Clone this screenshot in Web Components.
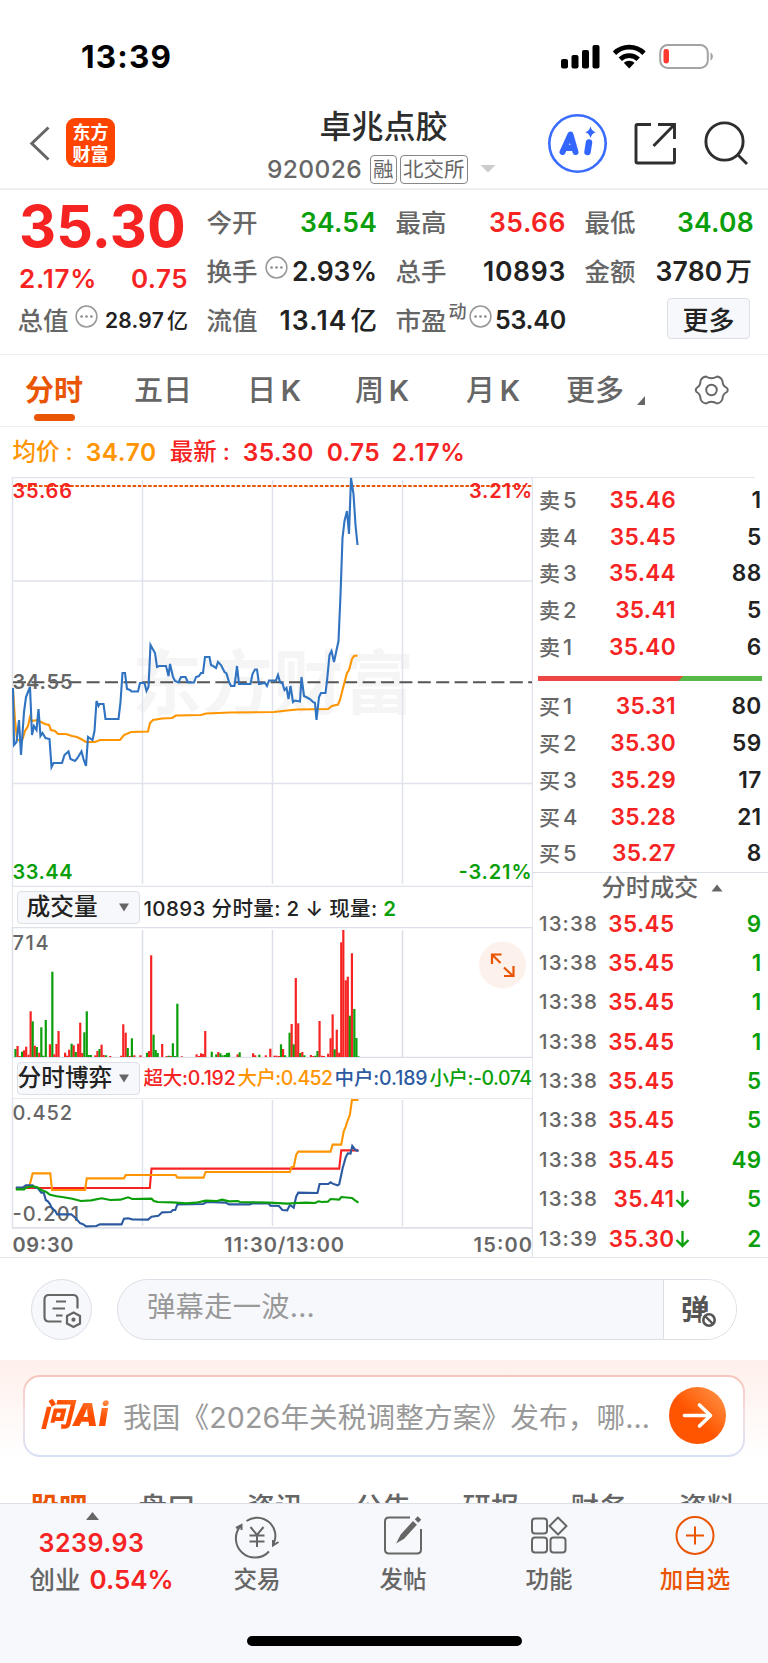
<!DOCTYPE html>
<html lang="zh-CN">
<head>
<meta charset="utf-8">
<title>卓兆点胶 920026</title>
<style>
  body {
    margin: 0;
    width: 768px;
    background: #fff;
    color: #222;
    font-family: Inter, "Noto Sans CJK SC", sans-serif;
    font-weight: 500;
    --red: #f62323;
    --green: #0a9f0a;
    --grey: #666;
    --brand: #ea5504;
    --line: #e4e6ec;
    --num: 560;
  }
</style>
</head>
<body>
<status-bar time="13:39"></status-bar>
<stock-nav code="920026">卓兆点胶</stock-nav>
<quote-panel></quote-panel>
<chart-tabs></chart-tabs>
<trade-area></trade-area>
<danmu-bar></danmu-bar>
<ask-ai>我国《2026年关税调整方案》发布，哪…</ask-ai>
<bottom-bar></bottom-bar>

<script>
class BaseElement extends HTMLElement {
  connectedCallback() {
    if (this.shadowRoot) return;
    this.attachShadow({ mode: "open" });
    this.shadowRoot.innerHTML = this.render();
  }
}

// Text tracked out to a given advance width
class FitText extends HTMLElement {
  connectedCallback() {
    if (this.shadowRoot) return;
    this.attachShadow({ mode: "open" });
    this.shadowRoot.innerHTML = `
    <style>
    :host { display: inline-block; white-space: nowrap; }
    span { display: inline-block; }
    </style>
    <span><slot></slot></span>`;
    const count = [...this.textContent].length;
    const natural = this.shadowRoot.querySelector("span").getBoundingClientRect().width;
    const width = Number(this.getAttribute("w"));
    this.style.letterSpacing = (width - natural) / count + "px";
  }
}
customElements.define("fit-text", FitText);

class InfoDot extends BaseElement {
  render() {
    return `
    <style>
    :host { display: block; width: 23px; height: 23px; flex: none; }
    svg { display: block; }
    </style>
    <svg width="23" height="23" viewBox="0 0 23 23">
      <circle cx="11.5" cy="11.5" r="10.4" fill="none" stroke="#999" stroke-width="1.5"/>
      <g fill="#888"><circle cx="6.6" cy="11.5" r="1.3"/><circle cx="11.5" cy="11.5" r="1.3"/><circle cx="16.4" cy="11.5" r="1.3"/></g>
    </svg>`;
  }
}
customElements.define("info-dot", InfoDot);

class StatusBar extends BaseElement {
  render() {
    return `
    <style>
    :host { display: flex; height: 92px; box-sizing: border-box; padding: 40px 55px 0 81px; justify-content: space-between; color: #000; }
    .time { font-size: 31.5px; line-height: 33px; font-weight: 700; }
    svg { display: block; margin-top: 2px; }
    </style>
    <fit-text class="time" w="91">${this.getAttribute("time")}</fit-text>
    <svg width="153" height="28" viewBox="560 42 153 28">
      <rect x="561" y="59" width="7" height="9.5" rx="2"/>
      <rect x="571.5" y="55" width="7" height="13.5" rx="2"/>
      <rect x="582" y="50" width="7" height="18.5" rx="2"/>
      <rect x="592.5" y="45" width="7" height="23.5" rx="2"/>
      <g fill="none" stroke="#000" stroke-width="4.8">
        <path d="M614.5 53.2a21 21 0 0 1 29.5 0"/>
        <path d="M620.3 59.2a12.8 12.8 0 0 1 17.9 0"/>
      </g>
      <path d="M623.8 62.8a8 8 0 0 1 10.8 0L629.2 68.6z"/>
      <rect x="660.2" y="45" width="47.6" height="23" rx="7.5" fill="none" stroke="#a3a3a3" stroke-width="2"/>
      <rect x="663.5" y="49" width="5.5" height="14.5" rx="2.4" fill="#ff3b30"/>
      <path d="M710.5 52.5c3.2 1.4 3.2 6.600 0 8z" fill="#a3a3a3"/>
    </svg>`;
  }
}
customElements.define("status-bar", StatusBar);

class StockNav extends BaseElement {
  render() {
    return `
    <style>
    :host { display: grid; grid-template-columns: 220px 1fr 220px; height: 98px; border-bottom: 2px solid #eee; box-sizing: border-box; }
    .left { display: flex; align-items: flex-start; padding: 26px 0 0 28px; }
    .logo { margin-left: 14px; width: 49px; height: 49px; border-radius: 9px; background: #ff4400; color: #fff; font: 700 18px/22px "Noto Sans CJK SC", sans-serif; text-align: center; padding-top: 2px; box-sizing: border-box; }
    .mid { display: flex; flex-direction: column; align-items: center; padding-top: 17px; }
    .name { font-size: 32px; line-height: 36px; color: #2d2d2d; margin-left: -1px; }
    .sub { display: flex; align-items: center; align-self: flex-start; margin-left: 47px; height: 32px; margin-top: 8px; color: var(--grey); font-size: 24.5px; }
    .tag { border: 1.5px solid #888; border-radius: 4px; height: 27px; line-height: 27px; font-size: 20.5px; font-weight: 400; padding: 0 2px; margin-right: 3.5px; }
    .tag:first-of-type { margin-left: 8px; }
    .right { display: block; }
    </style>
    <div class="left">
      <svg width="24" height="50" viewBox="28 118 24 50"><path d="M48.5 127.5L31.8 143.5L48.5 159.5" fill="none" stroke="#666" stroke-width="3"/></svg>
      <div class="logo">东方<br>财富</div>
    </div>
    <div class="mid">
      <div class="name"><slot></slot></div>
      <div class="sub"><fit-text w="95">${this.getAttribute("code")}</fit-text><span class="tag">融</span><span class="tag">北交所</span>
        <svg width="16" height="8" style="margin-left:9px"><path d="M0.5 0h15l-7.5 7.5z" fill="#ccc"/></svg>
      </div>
    </div>
    <svg class="right" width="220" height="90" viewBox="548 92 220 90">
      <circle cx="577.5" cy="143.5" r="28.2" fill="#fff" stroke="#3a6cff" stroke-width="2.6"/>
      <g fill="none" stroke="#3366ff" stroke-linecap="round" stroke-linejoin="round">
        <path d="M562.5 152L570.5 134.500L575.5 152M566.5 148h7" stroke-width="6"/>
        <path d="M589 142.5l-1.500 9.500" stroke-width="6.5"/>
      </g>
      <path d="M590.5 126.500q1.200 4.500 5.300 5.700q-4.100 1.200-5.300 5.700q-1.200-4.500-5.300-5.700q4.100-1.200 5.300-5.700z" fill="#3366ff"/>
      <g fill="none" stroke="#2e2e2e" stroke-width="2.9">
        <path d="M651 124.500H637.500Q636 124.500 636 126V161.500Q636 163 637.500 163H673Q674.500 163 674.500 161.500V148"/>
        <path d="M658 124.500H674.500V139M674 125L653.500 146"/>
        <circle cx="724.500" cy="141.500" r="18.6"/>
        <path d="M737.500 154.500L747 164"/>
      </g>
    </svg>`;
  }
}
customElements.define("stock-nav", StockNav);

class QuoteCell extends BaseElement {
  render() {
    const tone = this.getAttribute("tone");
    const unit = this.getAttribute("unit");
    return `
    <style>
    :host { display: flex; align-items: center; height: 49px; line-height: 49px; }
    .label { color: var(--grey); font-size: 25.5px; flex: none; margin-left: -1.5px; }
    sup { color: var(--grey); font-size: 18px; line-height: 20px; margin: -17px 2px 0 2px; }
    info-dot { margin: -8px 0 0 var(--dot-gap, 7px); }
    fit-text { color: ${tone ? `var(--${tone})` : "inherit"}; font-size: var(--size, 26.5px); font-weight: var(--num); margin-left: auto; }
    .unit { font-size: var(--size, 26.5px); margin-left: 3px; }
    </style>
    <span class="label">${this.getAttribute("label")}</span>${this.hasAttribute("sup") ? `<sup>${this.getAttribute("sup")}</sup>` : ""}${this.hasAttribute("dot") ? "<info-dot></info-dot>" : ""}
    <fit-text w="${this.getAttribute("w")}">${this.getAttribute("value")}</fit-text>${unit ? `<span class="unit">${unit}</span>` : ""}`;
  }
}
customElements.define("quote-cell", QuoteCell);

class QuotePanel extends BaseElement {
  render() {
    return `
    <style>
    :host { display: grid; grid-template-columns: 169px 169px 169px 168px; column-gap: 20px; height: 165px; box-sizing: border-box; border-bottom: 1px solid #eee; padding: 8px 0 0 19px; }
    .price { color: var(--red); font-size: 57.5px; font-weight: 700; line-height: 56px; height: 56px; vertical-align: top; }
    .change { display: flex; justify-content: space-between; color: var(--red); font-size: 26px; font-weight: var(--num); height: 42px; line-height: 49px; }
    button { display: block; margin: 2px 4px 0 auto; width: 83px; height: 41px; font: 500 26px/37px "Noto Sans CJK SC", sans-serif; color: #222; background: #f7f8fb; border: 1.5px solid #dcdfe6; border-radius: 4px; padding: 0; }
    </style>
    <div>
      <fit-text class="price" w="167">35.30</fit-text>
      <div class="change"><fit-text w="78">2.17%</fit-text><fit-text w="57">0.75</fit-text></div>
      <quote-cell style="--size:21px;--dot-gap:6px" label="总值" dot value="28.97" unit="亿" w="59"></quote-cell>
    </div>
    <div>
      <quote-cell label="今开" value="34.54" w="77" tone="green"></quote-cell>
      <quote-cell label="换手" dot value="2.93%" w="85"></quote-cell>
      <quote-cell label="流值" value="13.14" unit="亿" w="68"></quote-cell>
    </div>
    <div>
      <quote-cell label="最高" value="35.66" w="77" tone="red"></quote-cell>
      <quote-cell label="总手" value="10893" w="83"></quote-cell>
      <quote-cell style="--dot-gap:0px;--size:25px" label="市盈" sup="动" dot value="53.40" w="71"></quote-cell>
    </div>
    <div>
      <quote-cell label="最低" value="34.08" w="77" tone="green"></quote-cell>
      <quote-cell style="margin-right:2px" label="金额" value="3780" unit="万" w="67"></quote-cell>
      <button>更多</button>
    </div>`;
  }
}
customElements.define("quote-panel", QuotePanel);

class ChartTabs extends BaseElement {
  render() {
    return `
    <style>
    :host { display: flex; height: 72px; box-sizing: border-box; border-bottom: 1.5px solid #eee; padding-left: 25px; color: var(--grey); font-size: 29px; line-height: 71px; word-spacing: -3px; }
    div { width: 110px; white-space: nowrap; }
    .on { color: var(--brand); font-weight: 700; display: flex; flex-direction: column; }
    .on::after { content: ""; width: 41px; height: 7px; border-radius: 3.5px; background: var(--brand); margin: -12px 0 0 9px; }
    i { font-style: normal; font-weight: 600; }
    svg { display: block; }
    </style>
    <div class="on">分时</div>
    <div style="width:109px;margin-left:-1px">五日</div>
    <div style="width:112px;margin-left:4px">日 <i>K</i></div>
    <div style="width:111px;margin-left:-4px">周 <i>K</i></div>
    <div style="width:100px">月 <i>K</i></div>
    <div style="width:71px">更多</div>
    <svg width="120" height="70" viewBox="638 355 120 70">
      <path d="M646 396v9h-8z" fill="#666"/>
      <g fill="none" stroke="#666" stroke-width="1.9" stroke-linejoin="round">
        <path d="M707 376.500Q712.500 380 718 376.500Q722 377 723.500 381Q723.500 386 728 388Q729.500 390 728 392Q723.500 394 723.500 399Q722 403 718 403.500Q712.500 400 707 403.500Q703 403 701.500 399Q701.500 394 697.500 392Q696 390 697.500 388Q701.500 386 701.500 381Q703 377 707 376.500z"/>
        <circle cx="712.5" cy="390" r="5.3"/>
      </g>
    </svg>`;
  }
}
customElements.define("chart-tabs", ChartTabs);

class PriceChart extends BaseElement {
  render() {
    const price = "13,688 14,745 16.5,742 19,720 21,755 24,712 26,697 30,687 32,735 34,726 36.5,730 38.5,709 40.5,736 42.5,733 45.5,738 49.5,739 51.5,767 53.5,763 62,763 64.5,755 68.5,751.5 70.5,759 75,761 77.5,758 81.5,751.5 83.5,759 86,766 88,737 92.5,740 94.5,731 96.5,701 98.5,706 99.5,704 103.5,704 105.5,719 118.5,719 120.5,702 122.5,673 125,673 127,689 130,690 131.5,691.5 138,691.5 140,683 144.5,683 146.5,691 148.5,687 150.5,645 155,653 157,667 159,666 166,666 168.5,676 170,664 173,677 175,681 178.5,682.5 181,677 185.5,677 188,682.5 194,682.5 196,677 199,676 201,673 203,673 205,657 209.5,657 211,665 213,666 216,668 218,662 221,665 224.5,672 226.5,673.5 229,682 231,686 234.5,686 237,666 239,684 250.5,684 252.5,674 255,669.5 257,669.5 259,684 265,683 267,686 269,680.5 276,680.5 278,675 280,682 282.5,683.5 284.5,690 286.5,688 288.5,699 290.5,686 293,702 295,700.5 300,701.5 301.5,677 304,696 308,698 310.5,699.5 313,702 315,703 316.5,720 319,697 321,693 325.5,693 327,681 329.5,655 331.5,651 334,662 338.5,641 340.5,595 342.5,538 344.5,521 347,511 349,534 351,478 353.5,494 355.5,525 357.5,545";
    const average = "13,690 15,720 17,739 20,741 22,741 25,731 28,726 30,717 32,721 37,720 41,722 45,724 49,725 51,730 55,731 58,734 66,734 72,736 77,737 81,739 86,742 95,742 100,740 120,740 124,735 131,732 148,731.5 150,723 153,720 162,718.5 172,718 176,715.5 201,715 206,713.5 230,712.5 274,712 287,710.5 297,709.5 328,709 332,706 338,704.5 340,700 343,688 347,673 349,670 352,659 354,656 357.5,655.5";
    return `
    <style>
    :host { display: block; height: 410px; }
    svg { display: block; }
    text { font-size: 20px; font-weight: var(--num); }
    .mark { font: 700 70px "Noto Sans CJK SC", sans-serif; fill: #f5f5f6; }
    </style>
    <svg width="533" height="410" viewBox="0 477 533 410">
      <text class="mark" x="132" y="709" textLength="282">东方财富</text>
      <g stroke="#e0e3ec" fill="none" stroke-width="1.5">
        <path d="M12.5 477.5H533M12.5 477V886.500H533M12.5 581H532M12.5 783.5H532M142.5 480V884M272.5 480V884M402.5 480V884M532.5 477V887"/>
      </g>
      <path d="M13 486H532" stroke="#ea5504" stroke-width="2" stroke-dasharray="3.5 1.7"/>
      <path d="M13 682.3H532" stroke="#555" stroke-width="2" stroke-dasharray="13 5.4"/>
      <polyline points="${average}" fill="none" stroke="#ff9500" stroke-width="2.1"/>
      <polyline points="${price}" fill="none" stroke="#2f73c1" stroke-width="2.1"/>
      <text x="12.5" y="498" textLength="59.5" fill="#f62323">35.66</text>
      <text x="469" y="498" textLength="63" fill="#f62323">3.21%</text>
      <text x="12.5" y="689" textLength="60" fill="#666">34.55</text>
      <text x="12.5" y="879" textLength="60" fill="#0a9f0a">33.44</text>
      <text x="458.5" y="879" textLength="73" fill="#0a9f0a">-3.21%</text>
    </svg>`;
  }
}
customElements.define("price-chart", PriceChart);

// Indicator picker with its readout passed in
class IndicatorHead extends BaseElement {
  render() {
    return `
    <style>
    :host { display: flex; align-items: center; height: 40px; white-space: nowrap; border: solid var(--line); border-width: 0 1px; margin-left: 12px; padding-left: 3.5px; box-sizing: border-box; }
    .pick { display: flex; align-items: center; justify-content: space-between; flex: none; width: 123px; height: 33px; box-sizing: border-box; border: 1.5px solid #dcdfe6; border-radius: 4px; background: #f7f8fb; font-size: 23.7px; line-height: 30px; padding: 0 10px 0 var(--pad, 9px); margin-right: 4px; }
    </style>
    <div class="pick"><span>${this.getAttribute("name")}</span><svg width="10" height="9"><path d="M0 .5h10l-5 8z" fill="#666"/></svg></div>
    <slot></slot>`;
  }
}
customElements.define("indicator-head", IndicatorHead);

class VolumeChart extends BaseElement {
  render() {
    const bars = "45:507g 51:498r 57:528r 64:515g 70:511r 76:500r 83:524r 89:394r 95:424g 101:497r 107:501g 114:518r 120:442g 126:527g 133:420g 145:493r 152:275g 158:523r 164:492r 170:453r 189:518r 195:527r 201:509r 208:491g 214:496r 220:516g 227:491r 233:428r 239:519r 245:457g 252:394g 258:525g 264:525g 277:526r 283:513r 289:507g 295:494r 301:525r 308:526g 320:528r 352:527r 358:433r 365:458r 371:504g 377:528r 383:475g 390:526r 408:526r 427:518g 433:513r 439:226r 446:464g 452:510g 458:519g 471:492r 484:528r 490:527g 496:528r 502:490g 509:528g 515:371g 528:529r 571:523r 578:528r 584:520r 590:522r 596:453r 615:515g 628:523g 634:516r 640:520g 646:526g 653:525g 659:519g 665:518g 690:523r 696:517g 735:520r 741:526r 753:524g 772:526r 785:506r 797:527r 803:527r 810:528r 816:493g 822:507r 828:526g 841:458g 847:432r 853:493g 859:294r 866:430r 872:519g 878:516r 884:526g 903:525r 910:528r 916:527g 922:513g 928:423r 935:527r 941:528r 953:521r 960:475r 966:403r 972:508g 978:449r 985:518r 991:187r 997:150r 1004:301r 1010:290r 1016:407g 1022:220r 1029:387g 1035:474g 1041:529g";
    const rects = bars.split(" ").map((bar) => {
      const [, x, y, tone] = bar.match(/(\d+):(\d+)([rg])/);
      const top = 880 + y / 3;
      return `<rect x="${(x / 2.904 - 1.1).toFixed(2)}" y="${top.toFixed(1)}" width="2.2" height="${(1057 - top).toFixed(1)}" fill="${tone === "r" ? "#f62323" : "#0a9f0a"}"/>`;
    }).join("");
    return `
    <style>
    :host { display: block; height: 131px; }
    svg { display: block; }
    text { font-size: 20px; font-weight: 500; fill: #666; }
    </style>
    <svg width="533" height="131" viewBox="0 927 533 131">
      <path d="M12.5 927.5H533M142.5 930V1057M272.5 930V1057M402.5 930V1057M12.5 927V1057.5H533M532.5 927V1058" fill="none" stroke="#dcdfe8" stroke-width="1.5"/>
      ${rects}
      <text x="12.5" y="949.5" textLength="36">714</text>
      <circle cx="502.5" cy="965" r="23.5" fill="#fdf1eb"/>
      <path d="M501.5 954.5H492V964M492.5 955L500.5 963M504 967.5L513 976M513.5 966V976H504" fill="none" stroke="#ea5504" stroke-width="2.2"/>
    </svg>`;
  }
}
customElements.define("volume-chart", VolumeChart);

class FlowChart extends BaseElement {
  render() {
    const lines = [
      ["#f62323", "46,386 60,384 435,384 440,326 985,326 991,271 1041,271"],
      ["#ff9500", "46,388 80,380 87,372 95,340 146,340 151,390 247,390 252,355 360,355 365,345 510,345 515,353 591,353 597,336 842,336 847,321 853,321 860,285 866,275 960,275 966,254 991,254 998,215 1004,200 1010,180 1016,165 1022,120 1041,120"],
      ["#2c5aa0", "46,383 66,383 75,376 95,376 101,383 110,385 120,398 127,398 133,420 139,424 145,432 151,445 160,452 166,463 207,463 220,475 233,490 240,492 250,499 280,498 290,493 353,493 360,476 372,475 384,478 430,479 440,470 460,467 471,457 496,456 502,450 509,450 515,433 590,432 600,426 655,428 665,433 725,433 735,430 780,430 785,437 810,438 820,450 834,451 842,435 853,443 860,410 866,398 922,399 928,372 953,372 960,367 966,371 980,376 985,373 995,325 1004,292 1010,280 1018,281 1023,258 1032,270 1041,273"],
      ["#0a9f0a", "46,388 70,388 76,383 95,379 108,382 120,390 133,395 145,404 165,409 185,412 210,416 235,423 265,421 295,415 320,420 350,419 372,412 384,417 440,416 447,423 458,426 500,427 540,430 570,428 597,422 630,423 645,419 665,424 690,423 697,426 780,428 835,431 860,429 890,428 915,429 925,424 935,426 952,425 960,417 985,419 991,411 1022,414 1032,422 1041,428"],
    ];
    return `
    <style>
    :host { display: block; height: 159px; }
    svg { display: block; }
    text { font-size: 20px; fill: #666; font-weight: 500; }
    .axis text { font-weight: var(--num); }
    polyline { fill: none; stroke-width: 2.1; vector-effect: non-scaling-stroke; }
    </style>
    <svg width="533" height="159" viewBox="0 1098 533 159">
      <path d="M12.5 1098H533M142.5 1100V1226M272.5 1100V1226M402.5 1100V1226M12.5 1098V1227M532.5 1098V1257" fill="none" stroke="#dfe2ea" stroke-width="1.5"/>
      <path d="M12 1227.800H532" stroke="#dcdfe6" stroke-width="1.8"/>
      <text x="12.5" y="1120" textLength="59.5">0.452</text>
      <text x="12.5" y="1220.500" textLength="66.5">-0.201</text>
      <g transform="translate(0 1060) scale(.34436 .33333)">
        ${lines.map(([color, points]) => `<polyline points="${points}" stroke="${color}"/>`).join("")}
      </g>
      <g class="axis">
        <text x="12.5" y="1251.500" textLength="61">09:30</text>
        <text x="224" y="1251.500" textLength="120">11:30/13:00</text>
        <text x="473.5" y="1251.500" textLength="58.5">15:00</text>
      </g>
    </svg>`;
  }
}
customElements.define("flow-chart", FlowChart);

class OrderBook extends BaseElement {
  row([label, price, qty]) {
    return `<div class="row"><span class="l">${label[0]}<i>${label[1]}</i></span><span class="p">${price}</span><span class="q">${qty}</span></div>`;
  }
  render() {
    const sells = [["卖5", "35.46", 1], ["卖4", "35.45", 5], ["卖3", "35.44", 88], ["卖2", "35.41", 5], ["卖1", "35.40", 6]];
    const buys = [["买1", "35.31", 80], ["买2", "35.30", 59], ["买3", "35.29", 17], ["买4", "35.28", 21], ["买5", "35.27", 8]];
    return `
    <style>
    :host { display: block; height: 394.5px; box-sizing: border-box; padding-top: 4px; border-bottom: 1.5px solid #dcdfe6; }
    .row { display: grid; grid-template-columns: 50px 87px 1fr; padding: 0 6.5px 0 6px; height: 36.7px; line-height: 36.7px; font-size: 22.7px; font-weight: var(--num); }
    .l { color: var(--grey); font-size: 21px; font-weight: 500; }
    .l i { font-style: normal; font-size: 22px; margin-left: 3px; }
    .p { color: var(--red); text-align: right; letter-spacing: .3px; }
    .q { text-align: right; letter-spacing: .3px; }
    .bar { height: 5px; margin: 10.5px 6px 7.5px 5px; background: linear-gradient(135deg, #ee4545 0 63.2%, #57b947 63.6%); }
    </style>
    ${sells.map(this.row).join("")}
    <div class="bar"></div>
    ${buys.map(this.row).join("")}`;
  }
}
customElements.define("order-book", OrderBook);

class TradeTicks extends BaseElement {
  render() {
    const ticks = [["13:38", "35.45", "", 9], ["13:38", "35.45", "", 1], ["13:38", "35.45", "", 1], ["13:38", "35.45", "", 1], ["13:38", "35.45", "", 5], ["13:38", "35.45", "", 5], ["13:38", "35.45", "", 49], ["13:38", "35.41", "↓", 5], ["13:39", "35.30", "↓", 2]];
    const arrow = `<svg width="15" height="18"><path d="M7.500 1v15M1.500 10l6 6 6-6" fill="none" stroke="#0a9f0a" stroke-width="2.3"/></svg>`;
    return `
    <style>
    :host { display: block; height: 385px; box-sizing: border-box; }
    .head { display: flex; align-items: center; height: 31px; padding-left: 68.5px; color: var(--grey); font-size: 24.2px; line-height: 32px; }
    .head svg { margin-left: 13px; }
    .row { display: grid; grid-template-columns: 59px 76.5px 16px 1fr; padding: 0 6.5px 0 6px; height: 39.4px; line-height: 39.4px; font-size: 22.5px; font-weight: var(--num); }
    .t { color: var(--grey); font-size: 20.5px; font-weight: 500; }
    .p { color: var(--red); text-align: right; letter-spacing: .4px; }
    .a, .q { color: var(--green); letter-spacing: .3px; }
    .q { text-align: right; }
    .a svg { display: block; margin-top: 11px; }
    </style>
    <div class="head">分时成交<svg width="12" height="8"><path d="M6 .5l5.500 7H.5z" fill="#666"/></svg></div>
    ${ticks.map(([t, p, a, q]) => `<div class="row"><fit-text class="t" w="59">${t}</fit-text><span class="p">${p}</span><span class="a">${a && arrow}</span><span class="q">${q}</span></div>`).join("")}`;
  }
}
customElements.define("trade-ticks", TradeTicks);

class TradeArea extends BaseElement {
  render() {
    return `
    <style>
    :host { display: block; border-bottom: 1.5px solid #e2e4e9; height: 831px; box-sizing: border-box; }
    .latest { display: flex; height: 50px; line-height: 50px; font-size: 24.5px; font-weight: var(--num); padding-left: 12.5px; color: var(--red); white-space: nowrap; }
    .latest b { font-weight: 500; font-size: 23.5px; }
    .latest b::after { content: ":"; margin-left: 6px; }
    .latest .avg { color: #ff9500; }
    .cols { display: grid; grid-template-columns: 533px 235px; }
    .book::before { content: ""; display: block; height: 1px; width: 222px; background: var(--line); }
    .vol { font-size: 20.5px; margin-top: -1px; }
    .vol span { color: var(--green); font-weight: 600; }
    .flow { display: flex; font-size: 19.5px; gap: 2px; margin-top: -3px; }
    </style>
    <div class="latest">
      <b class="avg">均价</b><fit-text class="avg" w="71" style="margin-left:13px">34.70</fit-text>
      <b style="margin-left:13px">最新</b><fit-text w="71" style="margin-left:13px">35.30</fit-text>
      <fit-text w="53" style="margin-left:13px">0.75</fit-text><fit-text w="74" style="margin-left:12px">2.17%</fit-text>
    </div>
    <div class="cols">
      <div>
        <price-chart></price-chart>
        <indicator-head name="成交量"><fit-text class="vol" w="253">10893 分时量: 2 ↓ 现量: <span>2</span></fit-text></indicator-head>
        <volume-chart></volume-chart>
        <indicator-head name="分时博弈" style="--pad:0px"><span class="flow"><fit-text w="92" style="color:var(--red)">超大:0.192</fit-text><fit-text w="95" style="color:#ff9500">大户:0.452</fit-text><fit-text w="93" style="color:#2c5aa0">中户:0.189</fit-text><fit-text w="102" style="color:var(--green)">小户:-0.074</fit-text></span></indicator-head>
        <flow-chart></flow-chart>
      </div>
      <div class="book">
        <order-book></order-book>
        <trade-ticks></trade-ticks>
      </div>
    </div>`;
  }
}
customElements.define("trade-area", TradeArea);

class DanmuBar extends BaseElement {
  render() {
    return `
    <style>
    :host { display: flex; height: 102px; box-sizing: border-box; padding: 20.5px 31px 0; gap: 25px; }
    .round { width: 61px; height: 61px; box-sizing: border-box; border-radius: 50%; border: 1.5px solid #dcdfe6; background: #f7f8fb; flex: none; }
    .pill { display: flex; flex: 1; height: 61px; box-sizing: border-box; border: 1.5px solid #dcdfe6; border-radius: 31px; background: #f7f8fb; overflow: hidden; color: #999; font-size: 28.3px; line-height: 55px; font-weight: 400; }
    .hint { flex: 1; padding-left: 29px; }
    .off { display: flex; width: 73px; border-left: 1.5px solid #dcdfe6; background: #fff; color: #555; font: 700 28.5px/56px "Noto Sans CJK SC", sans-serif; padding-left: 17px; box-sizing: border-box; }
    .off svg { margin: 31px 0 0 -10px; flex: none; }
    svg { display: block; }
    </style>
    <div class="round">
      <svg width="58" height="58" viewBox="32.5 1280 58 58" fill="none" stroke="#666" stroke-width="2.2">
        <path d="M62 1321.500H49.500Q45 1321.500 45 1317V1299.500Q45 1295 49.500 1295H73.500Q78 1295 78 1299.500V1308.500"/>
        <path d="M56.5 1301.500H66.500M53 1308.500H65.500M56.5 1315.500H63"/>
        <path d="M74 1312.500L80.5 1316V1323.500L74 1327L67.5 1323.500V1316z" fill="#f7f8fb"/>
        <circle cx="74" cy="1319.700" r="1"/>
      </svg>
    </div>
    <div class="pill">
      <div class="hint"><fit-text w="168">弹幕走一波...</fit-text></div>
      <div class="off">弹<svg width="18" height="18" viewBox="0 0 18 18"><circle cx="9" cy="9" r="7" fill="#fff" stroke="#fff" stroke-width="3"/><circle cx="9" cy="9" r="5.7" fill="none" stroke="#555" stroke-width="2.6"/><path d="M5 5l8 8" stroke="#555" stroke-width="2.4"/></svg></div>
    </div>`;
  }
}
customElements.define("danmu-bar", DanmuBar);

class AskAi extends BaseElement {
  render() {
    const tabs = ["股吧", "盘口", "资讯", "公告", "研报", "财务", "资料"];
    return `
    <style>
    :host { display: block; height: 143px; overflow: hidden; box-sizing: border-box; padding-top: 15px; background: linear-gradient(#fef0eb, #fff 100px); }
    .card { display: flex; align-items: center; height: 82px; margin: 0 23px; box-sizing: border-box; border: 2px solid transparent; border-radius: 17px; background: linear-gradient(#fff, #fff) padding-box, linear-gradient(#fbc3ba, #f3dfe4 50%, #d7e1f4) border-box; padding: 0 17px 2px 15px; }
    .logo { width: 70px; height: 36px; font: italic 900 32px/36px Inter, "Noto Sans CJK SC", sans-serif; background: linear-gradient(20deg, #ff4e00 60%, #ff9a55); -webkit-background-clip: text; color: transparent; }
    .q { flex: 1; margin-left: 13px; font-size: 28.6px; color: #999; font-weight: 400; white-space: nowrap; }
    .go { display: block; flex: none; }
    .tabs { display: flex; padding-left: 30.5px; margin-top: 32.5px; font-size: 28.5px; line-height: 36px; color: var(--grey); }
    .tabs span { width: 108px; flex: none; }
    .tabs span:first-child { color: var(--brand); font-weight: 700; }
    </style>
    <div class="card">
      <span class="logo"><fit-text w="69">问Ai</fit-text></span>
      <span class="q"><fit-text w="527">${this.textContent}</fit-text></span>
      <svg class="go" width="57" height="57" viewBox="0 0 57 57">
        <defs><linearGradient id="g" x1="0" y1="1" x2="1" y2="0"><stop offset=".45" stop-color="#ff5500"/><stop offset="1" stop-color="#ff9a4d"/></linearGradient></defs>
        <circle cx="28.5" cy="28.5" r="28.5" fill="url(#g)"/>
        <path d="M15.5 28.500H41M30.5 18L41.5 28.500L30.5 39" fill="none" stroke="#fff" stroke-width="3.6" stroke-linecap="round" stroke-linejoin="round"/>
      </svg>
    </div>
    <div class="tabs">${tabs.map((tab) => `<span>${tab}</span>`).join("")}</div>`;
  }
}
customElements.define("ask-ai", AskAi);

class BottomBar extends BaseElement {
  render() {
    const icons = [
      ["交易", `<path d="M12.500 8A18.300 18.300 0 0 1 39.500 31M2 15l5.500-3V17M7 12.500A19 19 0 0 0 35 38.500M44.500 29l-5.500 3.500V27"/><path d="M16.500 14l6.500 8 6.500-8M15.500 22.500h15M15.500 28.500h15M23 22v12"/>`],
      ["发帖", `<path d="M30 4.500H9Q5 4.500 5 8.500V36.500Q5 40.500 9 40.500H37Q41 40.500 41 36.500V16"/><path d="M18.500 28l3-6 11.500-12.500 2.500 2.300L23.500 25z" fill="#666"/><path d="M36.500 8l3-3" stroke-width="5"/>`],
      ["功能", `<rect x="6" y="5.500" width="15" height="15" rx="3"/><rect x="6" y="24.500" width="15" height="15" rx="3"/><rect x="24.500" y="24.500" width="15" height="15" rx="3"/><path d="M32 4.500l8.500 8.500-8.500 8.500-8.500-8.500z" stroke-linejoin="round"/>`],
      ["加自选", `<circle cx="23" cy="22.500" r="18.500"/><path d="M23 13.500v18M14 22.500h18"/>`],
    ];
    return `
    <style>
    :host { display: flex; flex-direction: column; height: 160px; box-sizing: border-box; border-top: 1.5px solid #dcdfe6; background: #f7f8fb; color: var(--grey); }
    .row { display: grid; grid-template-columns: 184px 146px 146px 146px 146px; height: 132px; flex: none; }
    .index { display: flex; flex-direction: column; padding-left: 29.5px; font-size: 25.5px; }
    .index svg { margin: 8px 0 0 56px; }
    .index .v { color: var(--red); line-height: 30px; font-size: 25px; font-weight: var(--num); margin: 8px 0 0 9px; }
    .index .n { line-height: 36px; margin-top: 4px; }
    .n fit-text { color: var(--red); font-size: 26px; font-weight: var(--num); margin-left: 9px; }
    .item { display: flex; flex-direction: column; align-items: center; font-size: 23.5px; line-height: 34px; padding-top: 9px; }
    .item svg { fill: none; stroke: currentColor; stroke-width: 2; margin-bottom: 4px; }
    .item:last-child { color: var(--brand); }
    .home { width: 275px; height: 10px; border-radius: 5px; background: #000; margin: 0 auto; }
    </style>
    <div class="row">
      <div class="index">
        <svg width="13" height="8"><path d="M6.500 0l6.500 8H0z" fill="#666"/></svg>
        <fit-text class="v" w="106">3239.93</fit-text>
        <div class="n">创业<fit-text w="84">0.54%</fit-text></div>
      </div>
      ${icons.map(([label, shape]) => `<div class="item"><svg width="46" height="46" viewBox="0 0 46 46">${shape}</svg>${label}</div>`).join("")}
    </div>
    <div class="home"></div>`;
  }
}
customElements.define("bottom-bar", BottomBar);
</script>
</body>
</html>
